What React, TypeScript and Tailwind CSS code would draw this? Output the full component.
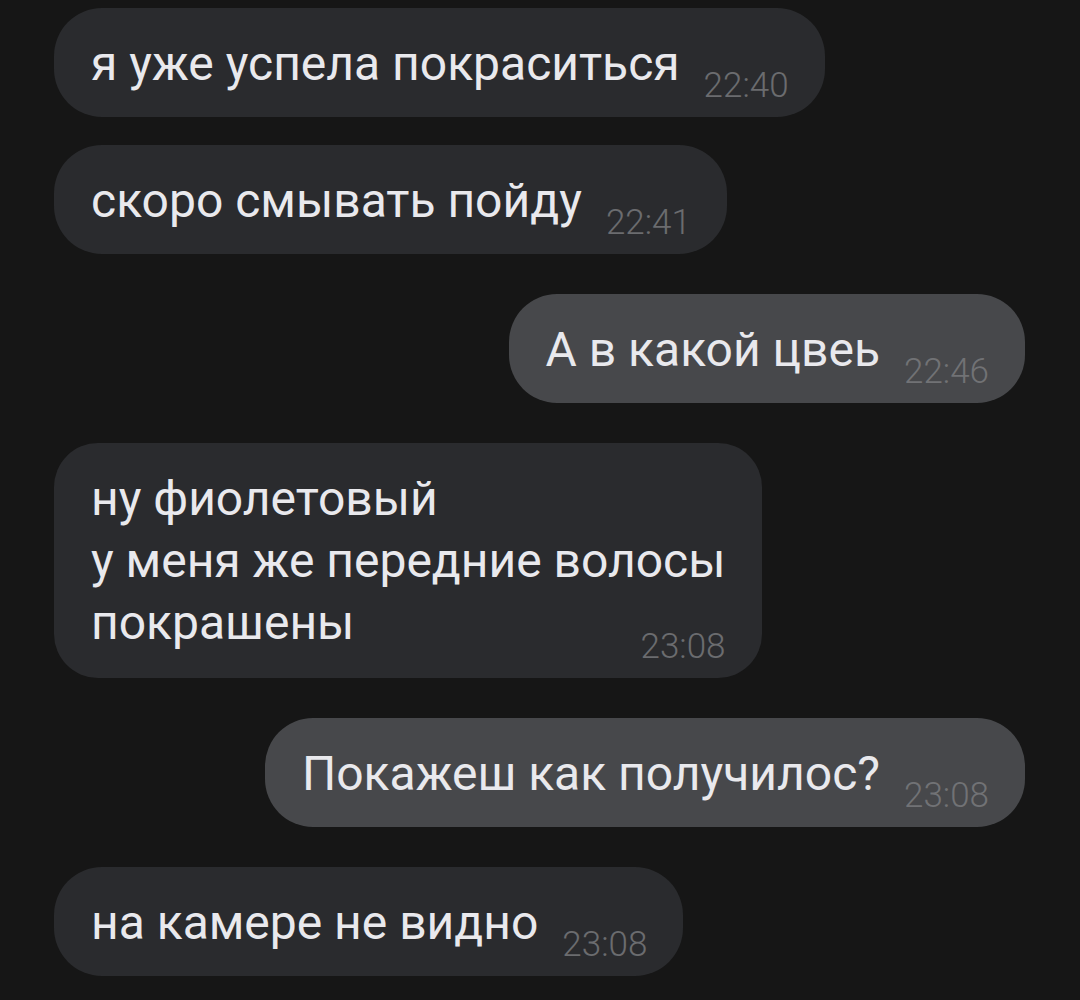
type Message = {
  id: number;
  text: string;
  time: string;
  out?: boolean;
  multiline?: boolean;
};

const messages: Message[] = [
  { id: 1, text: 'я уже успела покраситься', time: '22:40' },
  { id: 2, text: 'скоро смывать пойду', time: '22:41' },
  { id: 3, text: 'А в какой цвеь', time: '22:46', out: true },
  {
    id: 4,
    text: 'ну фиолетовый\nу меня же передние волосы\nпокрашены',
    time: '23:08',
    multiline: true,
  },
  { id: 5, text: 'Покажеш как получилос?', time: '23:08', out: true },
  { id: 6, text: 'на камере не видно', time: '23:08' },
];

function Time({ value, out }: { value: string; out?: boolean }) {
  return (
    <span
      className={`-mb-[3px] block shrink-0 text-[35px] font-light leading-[24px] ${
        out ? 'text-[#717275]' : 'text-[#6b6c6f]'
      }`}
    >
      {value}
    </span>
  );
}

function Bubble({ msg }: { msg: Message }) {
  const bg = msg.out ? 'bg-[#47484b]' : 'bg-[#2a2b2e]';

  if (msg.multiline) {
    return (
      <div className={`flex flex-col rounded-[44px] ${bg} pl-[37px] pr-[36px] pt-[25px] pb-[22px]`}>
        <div className="whitespace-pre-line text-[48px] leading-[62px] text-[#e9e9ed]">{msg.text}</div>
        <div className="-mt-[19px] flex justify-end">
          <Time value={msg.time} out={msg.out} />
        </div>
      </div>
    );
  }

  return (
    <div className={`flex items-end gap-[24px] rounded-[48px] ${bg} pl-[37px] pr-[36px] pt-[25px] pb-[22px]`}>
      <span className="whitespace-nowrap text-[48px] leading-[62px] text-[#e9e9ed]">{msg.text}</span>
      <Time value={msg.time} out={msg.out} />
    </div>
  );
}

export default function App() {
  return (
    <div
      className="min-h-[1000px] w-[1080px] bg-[#161616] px-[54px] pt-[8px]"
      style={{ fontFamily: 'Roboto, "Noto Sans", sans-serif' }}
    >
      <div className="flex flex-col">
        {messages.map((msg, i) => {
          const prev = messages[i - 1];
          const top = !prev ? '' : prev.out === msg.out ? 'mt-[28px]' : 'mt-[40px]';
          return (
            <div key={msg.id} className={`flex ${msg.out ? 'justify-end pr-px' : 'justify-start'} ${top}`}>
              <Bubble msg={msg} />
            </div>
          );
        })}
      </div>
    </div>
  );
}
